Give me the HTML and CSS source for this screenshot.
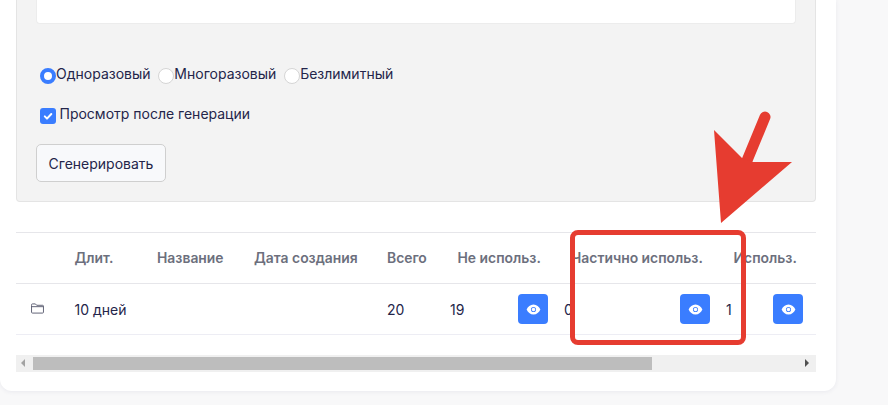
FILE: index.html
```html
<!DOCTYPE html>
<html lang="ru">
<head>
    <meta charset="UTF-8">
    <title>Генерация</title>
    <link rel="stylesheet" href="styles.css">
</head>
<body>
    <div class="card">
        <div class="panel">
            <div class="text-box"></div>
            <div class="radio-row">
                <label class="radio-item"><span class="radio checked"></span>Одноразовый</label>
                <label class="radio-item"><span class="radio"></span>Многоразовый</label>
                <label class="radio-item"><span class="radio"></span>Безлимитный</label>
            </div>
            <label class="check-row">
                <span class="checkbox">
                    <svg viewBox="0 0 16 16" width="16" height="16"><path d="M4.800 8.400l2.200 2.200 4.300-4.600" fill="none" stroke="#fff" stroke-width="2" stroke-linecap="round" stroke-linejoin="round"/></svg>
                </span>
                Просмотр после генерации
            </label>
            <button class="btn-generate">Сгенерировать</button>
        </div>

        <div class="table-wrap">
            <table class="codes">
                <colgroup>
                    <col class="c-icon"><col class="c-len"><col class="c-name"><col class="c-date"><col class="c-total">
                    <col class="c-num1"><col class="c-btn"><col class="c-num2"><col class="c-btn"><col class="c-num3"><col class="c-btn"><col>
                </colgroup>
                <thead>
                    <tr>
                        <th></th>
                        <th>Длит.</th>
                        <th>Название</th>
                        <th>Дата создания</th>
                        <th>Всего</th>
                        <th colspan="2">Не использ.</th>
                        <th colspan="2">Частично использ.</th>
                        <th colspan="2">Использ.</th>
                        <th></th>
                    </tr>
                </thead>
                <tbody>
                    <tr>
                        <td class="folder">
                            <svg viewBox="0 0 14 12" width="13" height="11"><path d="M.5 2.500V2A1 1 0 0 1 1.500 1h3.200l1.400 1.500h6.400a1 1 0 0 1 1 1V10a1 1 0 0 1-1 1h-11a1 1 0 0 1-1-1V2.500zM.5 4h13" fill="none" stroke="#55586c" stroke-width="1"/></svg>
                        </td>
                        <td class="first-val">10 дней</td>
                        <td></td>
                        <td></td>
                        <td>20</td>
                        <td class="num">19</td>
                        <td><button class="btn-eye"><svg viewBox="0 0 16 12" width="15" height="11"><path fill="#fff" fill-rule="evenodd" d="M8 .5c3.400 0 6.200 2.300 7.500 5.500-1.300 3.200-4.100 5.500-7.500 5.500S1.800 9.200.5 6C1.800 2.800 4.600.5 8 .5zM8 3.200a2.800 2.800 0 1 0 0 5.600 2.800 2.800 0 0 0 0-5.600z"/><circle cx="8" cy="6" r="1.900" fill="#fff"/></svg></button></td>
                        <td class="num">0</td>
                        <td><button class="btn-eye"><svg viewBox="0 0 16 12" width="15" height="11"><path fill="#fff" fill-rule="evenodd" d="M8 .5c3.400 0 6.200 2.300 7.500 5.500-1.300 3.200-4.100 5.500-7.500 5.500S1.800 9.200.5 6C1.800 2.800 4.600.5 8 .5zM8 3.200a2.800 2.800 0 1 0 0 5.600 2.800 2.800 0 0 0 0-5.600z"/><circle cx="8" cy="6" r="1.900" fill="#fff"/></svg></button></td>
                        <td class="num">1</td>
                        <td><button class="btn-eye"><svg viewBox="0 0 16 12" width="15" height="11"><path fill="#fff" fill-rule="evenodd" d="M8 .5c3.400 0 6.200 2.300 7.500 5.500-1.300 3.200-4.100 5.500-7.500 5.500S1.800 9.200.5 6C1.800 2.800 4.600.5 8 .5zM8 3.200a2.800 2.800 0 1 0 0 5.600 2.800 2.800 0 0 0 0-5.600z"/><circle cx="8" cy="6" r="1.900" fill="#fff"/></svg></button></td>
                        <td></td>
                    </tr>
                </tbody>
            </table>
        </div>

        <div class="scrollbar">
            <span class="arrow arrow-left"></span>
            <div class="track"><div class="thumb"></div></div>
            <span class="arrow arrow-right"></span>
        </div>
    </div>

    <!-- annotation drawn over the screenshot -->
    <div class="mark-box"></div>
    <svg class="mark-arrow" viewBox="0 0 888 405" width="888" height="405">
        <path d="M765 117L746 163" stroke="#e63c30" stroke-width="11" stroke-linecap="round" fill="none"/>
        <path d="M714 130L742 158L753 162L792 162L721 223z" fill="#e63c30"/>
    </svg>
</body>
</html>
```

FILE: styles.css
```css
html, body {
    margin: 0;
    height: 405px;
    overflow: hidden;
    background: #f8f8f9;
}

body {
    font-family: Inter, "Noto Sans", sans-serif;
    font-size: 14px;
    color: #24254a;
}

.card {
    width: 836px;
    height: 391px;
    box-sizing: border-box;
    padding: 0 20px 0 16px;
    background: #fff;
    border-radius: 0 0 12px 12px;
    box-shadow: 0 1px 4px rgba(60, 60, 120, 0.08);
}

.panel {
    height: 202px;
    box-sizing: border-box;
    padding: 0 19px;
    background: #f3f3f3;
    border: 1px solid #e4e4e4;
    border-top: none;
    border-radius: 0 0 4px 4px;
}

.text-box {
    height: 24px;
    box-sizing: border-box;
    background: #fff;
    border: 1px solid #ececec;
    border-top: none;
    border-radius: 0 0 4px 4px;
}

.radio-row {
    display: flex;
    margin: 41px 0 0 4px;
    height: 19px;
    line-height: 17px;
}

.radio-item {
    display: flex;
    align-items: flex-start;
    margin-right: 7.800px;
}

.radio {
    width: 16px;
    height: 16px;
    margin-top: 3px;
    box-sizing: border-box;
    border: 1px solid #d5d5d5;
    border-radius: 50%;
    background: #fff;
}

.radio.checked {
    border: 4.500px solid #3a7dff;
}

.check-row {
    display: flex;
    align-items: flex-start;
    gap: 3.500px;
    margin: 21px 0 0 4px;
    height: 19px;
    line-height: 17px;
}

.checkbox {
    width: 16px;
    height: 16px;
    margin-top: 3px;
    background: #3a7dff;
    border-radius: 3px;
}

.checkbox svg {
    display: block;
}

.btn-generate {
    display: block;
    width: 130px;
    height: 38px;
    margin-top: 20px;
    padding: 0;
    font: inherit;
    color: #24254a;
    background: #f8f9fb;
    border: 1px solid #cfcfcf;
    border-radius: 5px;
}

.table-wrap {
    width: 800px;
    margin-top: 30px;
    overflow: hidden;
}

.codes {
    width: 990px;
    table-layout: fixed;
    border-collapse: collapse;
}

.c-icon { width: 47px; }
.c-len { width: 82px; }
.c-name { width: 97px; }
.c-date { width: 133px; }
.c-total { width: 71px; }
.c-num1 { width: 60px; }
.c-btn { width: 54px; }
.c-num2 { width: 108px; }
.c-num3 { width: 39px; }

.codes th,
.codes td {
    height: 50px;
    padding: 0 12px;
    text-align: left;
    white-space: nowrap;
}

.codes th {
    font-weight: 600;
    font-size: 13.900px;
    color: #6c6f7d;
    border-top: 1px solid #e6e6ea;
    border-bottom: 1px solid #e6e6ea;
}

.codes th:nth-child(2),
.codes td.first-val {
    padding-left: 11.500px;
}

.codes th:nth-child(n+6) {
    padding-left: 11.500px;
}

.codes td {
    border-bottom: 1px solid #ededf4;
}

.codes td.num {
    padding: 0 0 0 4px;
}

.folder svg {
    display: block;
    margin: -2px 0 0 3px;
}

.btn-eye {
    display: flex;
    align-items: center;
    justify-content: center;
    width: 30px;
    height: 30px;
    padding: 0;
    background: #3a7dff;
    border: none;
    border-radius: 4px;
}

.scrollbar {
    display: flex;
    align-items: stretch;
    width: 800px;
    height: 17px;
    margin-top: 20px;
    background: #f0f0f0;
}

.arrow {
    position: relative;
    width: 17px;
}

.arrow::after {
    content: '';
    position: absolute;
    top: 4px;
    border: 4px solid transparent;
}

.arrow-left::after {
    left: 1px;
    border-right: 4px solid #a3a3a3;
}

.arrow-right::after {
    left: 6px;
    border-left: 4px solid #505050;
}

.track {
    flex: 1;
    padding: 2px 0;
}

.thumb {
    width: 619px;
    height: 13px;
    background: #bdbdbd;
}

.mark-box {
    position: absolute;
    left: 570px;
    top: 230px;
    width: 176px;
    height: 115px;
    box-sizing: border-box;
    border: 5px solid #e63c30;
    border-radius: 8px;
}

.mark-arrow {
    position: absolute;
    left: 0;
    top: 0;
    pointer-events: none;
}
```
